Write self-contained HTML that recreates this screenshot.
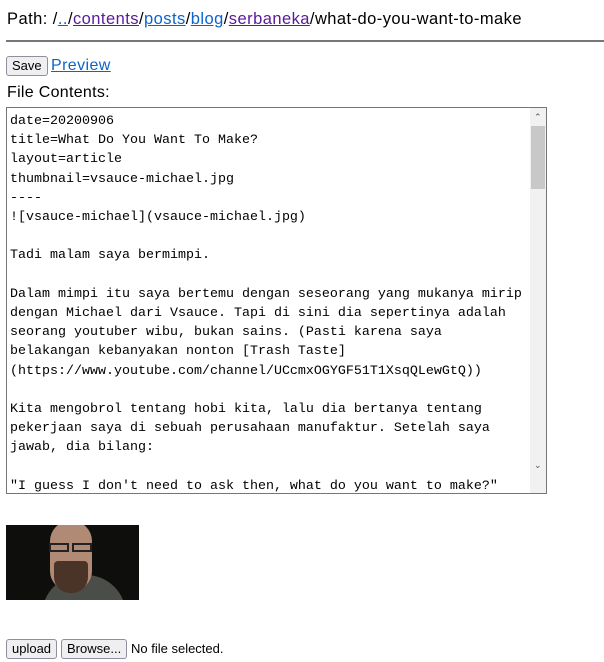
<!DOCTYPE html>
<html><head><style>
body{margin:0;background:#fff;font-family:"Liberation Sans",Arial,sans-serif;font-size:16px;color:#000;}
.path{position:absolute;left:7px;top:10px;font-size:16.5px;letter-spacing:0.45px;}
a{color:#0b63ce;}
a.v{color:#5a1a9a;}
hr{position:absolute;left:6px;top:40px;width:598px;margin:0;border:0;border-top:2px solid #777;}
.btn{position:absolute;background:#efeff1;border:1px solid #8f8f9d;border-radius:3px;font-size:13px;line-height:18px;padding:0 5px;}
.ta{position:absolute;left:6px;top:107px;width:539px;height:385px;border:1px solid #767676;overflow:hidden;}
.txt{position:absolute;left:3px;top:4px;font-family:"Liberation Mono",monospace;font-size:13.33px;line-height:19.2px;white-space:pre;color:#000;}
.sb{position:absolute;right:0;top:0;width:16px;height:385px;background:#f1f1f1;}
.th{position:absolute;right:1px;top:18px;width:14px;height:63px;background:#c8c8c8;}
</style></head><body>
<div class="path">Path: /<a href="#">..</a>/<a class="v" href="#">contents</a>/<a href="#">posts</a>/<a href="#">blog</a>/<a class="v" href="#">serbaneka</a>/what-do-you-want-to-make</div>
<hr>
<div class="btn" style="left:6px;top:56px;">Save</div>
<a href="#" style="position:absolute;left:51px;top:57px;letter-spacing:0.4px;">Preview</a>
<div style="position:absolute;left:7px;top:84px;letter-spacing:0.3px;">File Contents:</div>
<div class="ta"><div class="txt">date=20200906
title=What Do You Want To Make?
layout=article
thumbnail=vsauce-michael.jpg
----
![vsauce-michael](vsauce-michael.jpg)

Tadi malam saya bermimpi.

Dalam mimpi itu saya bertemu dengan seseorang yang mukanya mirip
dengan Michael dari Vsauce. Tapi di sini dia sepertinya adalah
seorang youtuber wibu, bukan sains. (Pasti karena saya
belakangan kebanyakan nonton [Trash Taste]
(https://www.youtube.com/channel/UCcmxOGYGF51T1XsqQLewGtQ))

Kita mengobrol tentang hobi kita, lalu dia bertanya tentang
pekerjaan saya di sebuah perusahaan manufaktur. Setelah saya
jawab, dia bilang:

"I guess I don't need to ask then, what do you want to make?"</div>
<div class="sb"><div class="th"></div>
<div style="position:absolute;left:4px;top:4px;font-size:9px;color:#555;">&#8963;</div>
<div style="position:absolute;left:4px;top:352px;font-size:9px;color:#555;">&#8964;</div></div>
</div>
<div style="position:absolute;left:6px;top:525px;width:133px;height:75px;background:#0e0e0c;overflow:hidden;">
<div style="position:absolute;left:36px;top:50px;width:84px;height:40px;background:#4a4d48;border-radius:40px 40px 0 0;"></div>
<div style="position:absolute;left:44px;top:-4px;width:42px;height:70px;background:#b08a75;border-radius:20px 20px 20px 20px;"></div>
<div style="position:absolute;left:48px;top:36px;width:34px;height:32px;background:#4a3428;border-radius:4px 4px 16px 16px;"></div>
<div style="position:absolute;left:43px;top:18px;width:20px;height:9px;border:2px solid #222;box-sizing:border-box;"></div>
<div style="position:absolute;left:66px;top:18px;width:20px;height:9px;border:2px solid #222;box-sizing:border-box;"></div>
</div>
<div class="btn" style="left:6px;top:639px;">upload</div>
<div class="btn" style="left:61px;top:639px;">Browse...</div>
<div style="position:absolute;left:131px;top:641px;font-size:13px;">No file selected.</div>
</body></html>
